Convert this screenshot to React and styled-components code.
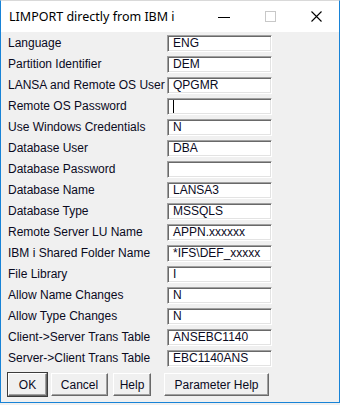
import React from "react";
import styled, { createGlobalStyle } from "styled-components";

const Global = createGlobalStyle`
  html, body {
    margin: 0;
    padding: 0;
    background: #f0f0f0;
  }
  * {
    box-sizing: border-box;
  }
`;

const Window = styled.div`
  width: 340px;
  height: 403px;
  border: 1px solid #1883d7;
  border-top-color: #d9d9d9;
  background: #f0f0f0;
  display: flex;
  flex-direction: column;
  font-family: "Liberation Sans", Arial, sans-serif;
  font-size: 12px;
  color: #000;
`;

const TitleBar = styled.div`
  height: 31px;
  background: #fff;
  display: flex;
  align-items: center;
  flex-shrink: 0;
`;

const Title = styled.div`
  flex: 1;
  padding-left: 8px;
  font-family: "Noto Sans", "Open Sans", sans-serif;
  font-size: 12.5px;
  color: #000;
`;

const Caption = styled.div`
  width: 46px;
  height: 31px;
  display: flex;
  align-items: center;
  justify-content: center;
`;

const Body = styled.div`
  padding: 3px 7px 0 7px;
  display: flex;
  flex-direction: column;
`;

const Form = styled.div`
  display: grid;
  grid-template-columns: 159px 105px;
  grid-auto-rows: 17px;
  row-gap: 4px;
`;

const Label = styled.div`
  display: flex;
  align-items: center;
  white-space: nowrap;
  line-height: 17px;
  color: #0a0a1e;
`;

const Field = styled.div`
  height: 17px;
  background: #fff;
  border-top: 1px solid #a0a0a0;
  border-left: 1px solid #a0a0a0;
  border-right: 1px solid #fff;
  border-bottom: 1px solid #fff;
  box-shadow: inset 1px 1px 0 #696969, inset -1px -1px 0 #e3e3e3;
  padding-left: 5px;
  display: flex;
  align-items: center;
  white-space: nowrap;
  overflow: hidden;
  line-height: 15px;
  color: #0a0a1e;
`;

const Caret = styled.span`
  display: inline-block;
  width: 1px;
  height: 13px;
  background: #000;
`;

const Buttons = styled.div`
  display: flex;
  margin-top: 6px;
`;

const Button = styled.button`
  width: ${(p) => p.w}px;
  height: 23px;
  margin-right: ${(p) => p.gap || 0}px;
  font-family: "Liberation Sans", Arial, sans-serif;
  font-size: 12px;
  color: #0a0a1e;
  background: #f0f0f0;
  border-top: 1px solid #fff;
  border-left: 1px solid #fff;
  border-right: 1px solid #696969;
  border-bottom: 1px solid #696969;
  box-shadow: ${(p) =>
    p.primary
      ? "inset -1px -1px 0 #a0a0a0, 0 0 0 1px #3c3c3c"
      : "inset -1px -1px 0 #a0a0a0"};
  padding: 0;
  cursor: pointer;
`;

const rows = [
  ["Language", "ENG"],
  ["Partition Identifier", "DEM"],
  ["LANSA and Remote OS User", "QPGMR"],
  ["Remote OS Password", null],
  ["Use Windows Credentials", "N"],
  ["Database User", "DBA"],
  ["Database Password", ""],
  ["Database Name", "LANSA3"],
  ["Database Type", "MSSQLS"],
  ["Remote Server LU Name", "APPN.xxxxxx"],
  ["IBM i Shared Folder Name", "*IFS\\DEF_xxxxx"],
  ["File Library", "I"],
  ["Allow Name Changes", "N"],
  ["Allow Type Changes", "N"],
  ["Client->Server Trans Table", "ANSEBC1140"],
  ["Server->Client Trans Table", "EBC1140ANS"],
];

export default function App() {
  return (
    <>
      <Global />
      <Window>
        <TitleBar>
          <Title>LIMPORT directly from IBM i</Title>
          <Caption>
            <svg width="12" height="12" viewBox="0 0 12 12">
              <path d="M0 6.5h12" stroke="#000" strokeWidth="1" />
            </svg>
          </Caption>
          <Caption>
            <svg width="11" height="11" viewBox="0 0 11 11">
              <rect x="0.5" y="0.5" width="10" height="10" fill="none" stroke="#c8c8c8" />
            </svg>
          </Caption>
          <Caption>
            <svg width="11" height="11" viewBox="0 0 11 11">
              <path d="M0.5 0.5L10.5 10.5M10.5 0.5L0.5 10.5" stroke="#000" strokeWidth="1.1" />
            </svg>
          </Caption>
        </TitleBar>
        <Body>
          <Form>
            {rows.map(([label, value]) => (
              <React.Fragment key={label}>
                <Label>{label}</Label>
                <Field>{value === null ? <Caret /> : value}</Field>
              </React.Fragment>
            ))}
          </Form>
          <Buttons>
            <Button w={39} gap={4} primary>OK</Button>
            <Button w={57} gap={5}>Cancel</Button>
            <Button w={38} gap={13}>Help</Button>
            <Button w={105}>Parameter Help</Button>
          </Buttons>
        </Body>
      </Window>
    </>
  );
}
